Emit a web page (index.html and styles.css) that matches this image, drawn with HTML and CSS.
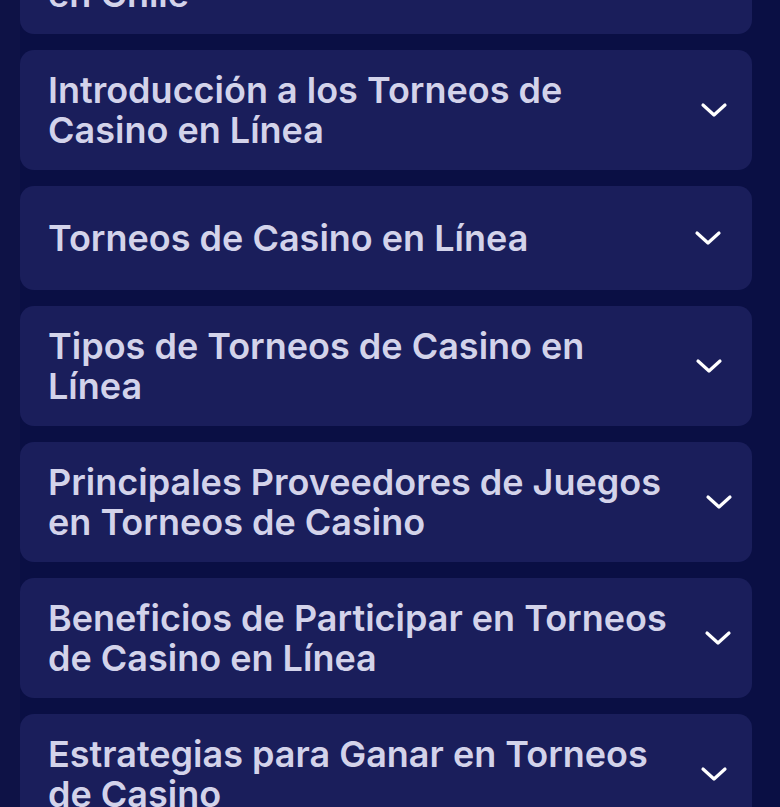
FILE: index.html
```html
<!DOCTYPE html>
<html lang="es">
<head>
<meta charset="utf-8">
<title>Torneos de Casino en Línea</title>
<link rel="stylesheet" href="styles.css">
</head>
<body>

<div class="faq">

  <div class="faq-item">
    <h3 class="faq-title">Legalidad de los Torneos de Casino<br>en Chile</h3>
    <span class="faq-toggle">
      <svg width="28" height="16" viewBox="0 0 28 16"><path d="M3 3l11 10L25 3"/></svg>
    </span>
  </div>

  <div class="faq-item">
    <h3 class="faq-title">Introducción a los Torneos de Casino en Línea</h3>
    <span class="faq-toggle">
      <svg width="28" height="16" viewBox="0 0 28 16"><path d="M3 3l11 10L25 3"/></svg>
    </span>
  </div>

  <div class="faq-item">
    <h3 class="faq-title">Torneos de Casino en Línea</h3>
    <span class="faq-toggle">
      <svg width="28" height="16" viewBox="0 0 28 16"><path d="M3 3l11 10L25 3"/></svg>
    </span>
  </div>

  <div class="faq-item">
    <h3 class="faq-title">Tipos de Torneos de Casino en Línea</h3>
    <span class="faq-toggle">
      <svg width="28" height="16" viewBox="0 0 28 16"><path d="M3 3l11 10L25 3"/></svg>
    </span>
  </div>

  <div class="faq-item">
    <h3 class="faq-title">Principales Proveedores de Juegos en Torneos de Casino</h3>
    <span class="faq-toggle">
      <svg width="28" height="16" viewBox="0 0 28 16"><path d="M3 3l11 10L25 3"/></svg>
    </span>
  </div>

  <div class="faq-item">
    <h3 class="faq-title">Beneficios de Participar en Torneos de Casino en Línea</h3>
    <span class="faq-toggle">
      <svg width="28" height="16" viewBox="0 0 28 16"><path d="M3 3l11 10L25 3"/></svg>
    </span>
  </div>

  <div class="faq-item">
    <h3 class="faq-title">Estrategias para Ganar en Torneos de Casino</h3>
    <span class="faq-toggle">
      <svg width="28" height="16" viewBox="0 0 28 16"><path d="M3 3l11 10L25 3"/></svg>
    </span>
  </div>

</div>

</body>
</html>
```

FILE: styles.css
```css
body {
  margin: 0;
  font-family: Inter, "Noto Sans", sans-serif;
  background: linear-gradient(to right, #0e1246 0, #0e1246 20px, #0a0f44 20px);
  overflow: hidden;
}

.faq {
  display: flex;
  flex-direction: column;
  gap: 16px;
  padding: 0 28px 0 20px;
  margin-top: -86px;
}

.faq-item {
  display: flex;
  align-items: center;
  justify-content: space-between;
  padding: 20px 12px 20px 28px;
  background: #1a1e5b;
  border-radius: 14px;
}

.faq-title {
  margin: 0;
  font-size: 36px;
  font-weight: 600;
  line-height: 40px;
  color: #d3d3ea;
}

.faq-toggle {
  display: flex;
  align-items: center;
  justify-content: center;
  width: 64px;
  height: 64px;
}

.faq-toggle svg {
  flex: none;
}

.faq-toggle path {
  fill: none;
  stroke: #fff;
  stroke-width: 3.2;
  stroke-linecap: round;
  stroke-linejoin: round;
}
```
